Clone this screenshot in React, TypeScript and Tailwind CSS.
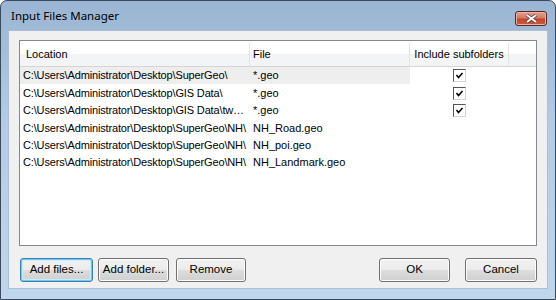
import React from 'react'

const rows = [
  { loc: 'C:\\Users\\Administrator\\Desktop\\SuperGeo\\', file: '*.geo', sub: true, hl: true },
  { loc: 'C:\\Users\\Administrator\\Desktop\\GIS Data\\', file: '*.geo', sub: true },
  { loc: 'C:\\Users\\Administrator\\Desktop\\GIS Data\\twmap_data\\', file: '*.geo', sub: true },
  { loc: 'C:\\Users\\Administrator\\Desktop\\SuperGeo\\NH\\', file: 'NH_Road.geo' },
  { loc: 'C:\\Users\\Administrator\\Desktop\\SuperGeo\\NH\\', file: 'NH_poi.geo' },
  { loc: 'C:\\Users\\Administrator\\Desktop\\SuperGeo\\NH\\', file: 'NH_Landmark.geo' },
]

function Check() {
  return (
    <div className="w-[13px] h-[13px] border border-[#555] border-r-[#d4d4d4] border-b-[#d4d4d4] bg-white flex items-center justify-center">
      <svg width="9" height="9" viewBox="0 0 9 9">
        <path d="M1.5 4 L3.5 6.5 L7.5 2" stroke="#000" strokeWidth="1.6" fill="none" />
      </svg>
    </div>
  )
}

function Btn({ label, w, def }: { label: string; w: string; def?: boolean }) {
  return (
    <button
      className={`${w} h-[24px] rounded-[3px] border text-[11.5px] text-black bg-[linear-gradient(#f2f2f2_0%,#ebebeb_50%,#dddddd_51%,#cfcfcf_100%)] ${
        def
          ? 'border-[#3c7fb1] shadow-[inset_0_0_0_1px_#72c8f0,inset_0_0_0_2px_#c9ecfb]'
          : 'border-[#707070] shadow-[inset_0_0_0_1px_#fcfcfc]'
      }`}
    >
      {label}
    </button>
  )
}

export default function App() {
  return (
    <div className="w-[556px] h-[300px] bg-white font-['Liberation_Sans',sans-serif]">
      <div className="w-[556px] h-[300px] rounded-t-[7px] border border-[#3a4a5c] bg-[linear-gradient(#9ab5d3_0%,#b3cbe5_40%,#c0d6ec_100%)] flex flex-col">
        <div className="h-[29px] shrink-0 flex items-center pl-[10px] pr-[8px]">
          <span className="text-[11.5px] text-black font-['Noto_Sans',sans-serif] mt-[1px]">Input Files Manager</span>
          <div className="ml-auto mt-[5px] w-[32px] h-[15px] rounded-[3px] border border-[#5a2621] bg-[linear-gradient(#e3a092_0%,#d47a66_45%,#c2462d_55%,#c95a3e_100%)] shadow-[inset_0_0_0_1px_#eab2a3] flex items-center justify-center">
            <svg width="13" height="9" viewBox="0 0 13 9">
              <path d="M2 1 L11 8 M11 1 L2 8" stroke="#4a2a28" strokeWidth="3.2" />
              <path d="M2 1 L11 8 M11 1 L2 8" stroke="#fff" strokeWidth="2" />
            </svg>
          </div>
        </div>
        <div className="mx-[7px] h-[259px] bg-[#f0f0f0] border border-[#a9bfd6] pt-[9px] px-[10px] flex flex-col">
          <div className="h-[206px] border border-[#828790] bg-white flex flex-col text-[11px] text-black">
            <div className="h-[26px] pt-[2px] flex items-stretch border-b border-[#d5d5d5] bg-[linear-gradient(#ffffff_0%,#ffffff_50%,#f3f4f6_51%,#f3f4f6_100%)]">
              <div className="w-[230px] border-r border-[#e3e4e6] pl-[6px] flex items-center">Location</div>
              <div className="w-[160px] border-r border-[#e3e4e6] pl-[3px] flex items-center">File</div>
              <div className="w-[99px] border-r border-[#e3e4e6] flex items-center justify-center">Include subfolders</div>
              <div className="flex-1" />
            </div>
            {rows.map((r, i) => (
              <div key={i} className="h-[17.4px] flex items-center">
                <div className={`w-[390px] h-full flex items-center ${r.hl ? 'bg-[#eeeeee]' : ''}`}>
                  <div className="w-[230px] pl-[3px] pr-[1px] overflow-hidden text-ellipsis whitespace-nowrap tracking-[-0.15px]">{r.loc}</div>
                  <div className="w-[160px] pl-[3px] whitespace-nowrap">{r.file}</div>
                </div>
                <div className="w-[99px] flex justify-center">{r.sub ? <Check /> : null}</div>
              </div>
            ))}
          </div>
          <div className="mt-[10px] flex items-center">
            <div className="ml-[1px]"><Btn label="Add files..." w="w-[73px]" def /></div>
            <div className="ml-[5px]"><Btn label="Add folder..." w="w-[71px]" /></div>
            <div className="ml-[7px]"><Btn label="Remove" w="w-[70px]" /></div>
            <div className="ml-auto"><Btn label="OK" w="w-[71px]" /></div>
            <div className="ml-[15px]"><Btn label="Cancel" w="w-[72px]" /></div>
          </div>
        </div>
      </div>
    </div>
  )
}
